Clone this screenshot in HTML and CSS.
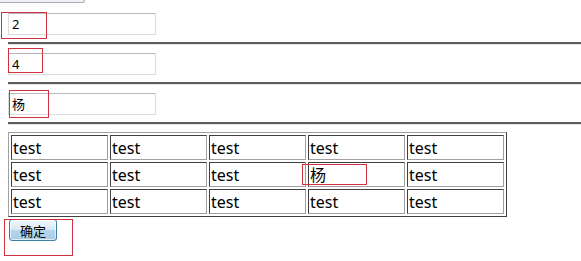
FILE: index.html
```html
<!DOCTYPE html>
<html lang="zh-CN">
  <head>
    <meta charset="UTF-8" />
    <title>测试</title>
    <link rel="stylesheet" href="styles.css">
  </head>
  <body>
    <div class="top-tab"></div>

    <div class="page">
      <div class="field"><input type="text" class="text-input" value="2" /></div>
      <hr class="divider" />
      <div class="field"><input type="text" class="text-input" value="4" /></div>
      <hr class="divider" />
      <div class="field"><input type="text" class="text-input" value="杨" /></div>
      <hr class="divider" />

      <table class="grid">
        <tr><td>test</td><td>test</td><td>test</td><td>test</td><td>test</td></tr>
        <tr><td>test</td><td>test</td><td>test</td><td>杨</td><td>test</td></tr>
        <tr><td>test</td><td>test</td><td>test</td><td>test</td><td>test</td></tr>
      </table>

      <button type="button" class="ok-btn">确定</button>
    </div>

    <!-- red marks drawn over the screenshot -->
    <div class="mark mark-1"></div>
    <div class="mark mark-2"></div>
    <div class="mark mark-3"></div>
    <div class="mark mark-4"></div>
    <div class="mark mark-5"></div>
  </body>
</html>
```

FILE: styles.css
```css
/* General styling */
body {
  margin: 0;
  padding: 0;
  background: #fff;
  font-family: "Noto Sans", "Noto Sans CJK SC", sans-serif;
  color: #000;
  position: relative;
  height: 261px;
  overflow: hidden;
}

.top-tab {
  width: 84px;
  height: 2px;
  background: #eef0f3;
  border-bottom: 1px solid #a8adb5;
  border-right: 1px solid #a8adb5;
  border-bottom-right-radius: 3px;
}

.page {
  padding: 9px 0 0 8px;
}

.field {
  height: 22px;
}

.text-input {
  box-sizing: border-box;
  width: 148px;
  height: 22px;
  margin: 0;
  padding: 0 3px;
  border: 1px solid #dcdcdc;
  border-top-color: #b8b8b8;
  font-family: "Noto Sans", "Noto Sans CJK SC", sans-serif;
  font-size: 13px;
  color: #000;
  background: #fff;
  outline: none;
}

.divider {
  margin: 8px 0;
  height: 0;
  border: none;
  border-top: 2px solid #5c5c5c;
  border-bottom: 1px solid #e6e6e6;
  box-sizing: content-box;
  height: 0;
  margin-bottom: 7px;
}

.grid {
  border-collapse: separate;
  border-spacing: 2px;
  border: 1px solid;
  border-color: #a0a0a0 #404040 #404040 #a0a0a0;
  margin-top: 1px;
}

.grid td {
  box-sizing: border-box;
  width: 97px;
  height: 25px;
  padding: 0 0 0 1px;
  border: 1px solid;
  border-color: #404040 #a0a0a0 #a0a0a0 #404040;
  font-size: 16px;
  line-height: 22px;
  vertical-align: middle;
}

.ok-btn {
  box-sizing: border-box;
  display: block;
  width: 48px;
  height: 22px;
  margin: 2px 0 0 1px;
  padding: 0;
  border: 1px solid #3c7fa8;
  border-radius: 3px;
  background: linear-gradient(#f2f8fc, #d6e8f4 50%, #b6d6ea 51%, #a8cce4);
  box-shadow: inset 0 0 0 1px rgba(255, 255, 255, 0.6);
  font-family: "Noto Sans CJK SC", sans-serif;
  font-size: 13px;
  color: #000;
}

/* annotation boxes */
.mark {
  position: absolute;
  box-sizing: border-box;
  border: 1px solid #d2323f;
}

.mark-1 { left: 1px; top: 12px; width: 46px; height: 27px; }
.mark-2 { left: 8px; top: 48px; width: 35px; height: 25px; }
.mark-3 { left: 9px; top: 90px; width: 40px; height: 28px; }
.mark-4 { left: 302px; top: 164px; width: 65px; height: 21px; }
.mark-5 { left: 4px; top: 219px; width: 69px; height: 37px; }
```
